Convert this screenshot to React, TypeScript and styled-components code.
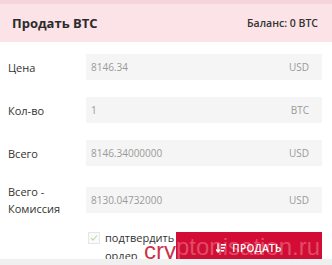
import React from "react";
import styled, { createGlobalStyle } from "styled-components";

const GlobalStyle = createGlobalStyle`
  html, body {
    margin: 0;
    padding: 0;
    background: #f0f0f0;
    font-family: "Open Sans", "Liberation Sans", sans-serif;
    color: #333;
  }
`;

const Panel = styled.div`
  position: relative;
  width: 332px;
  height: 259px;
  background: #fff;
  border-top: 4px solid #f5d4da;
  box-sizing: border-box;
`;

const Header = styled.div`
  height: 38px;
  background: #fbe3e7;
  display: flex;
  align-items: center;
  justify-content: space-between;
  padding: 0 14px 0 12px;
`;

const Title = styled.h2`
  margin: 0;
  font-size: 13px;
  font-weight: 700;
  color: #2b2b2b;
`;

const Balance = styled.span`
  font-size: 10.5px;
  font-weight: 600;
  color: #333;
`;

const Form = styled.div`
  display: flex;
  flex-direction: column;
  gap: 17px;
  padding: 12px 10px 0 8px;
`;

const Row = styled.div`
  display: grid;
  grid-template-columns: 78px 1fr;
  align-items: center;
`;

const Label = styled.label`
  font-size: 11px;
  line-height: 17px;
  color: #333;
  white-space: pre-line;
`;

const Field = styled.div`
  height: 26px;
  background: #f5f5f5;
  display: flex;
  align-items: center;
  justify-content: space-between;
  padding: 0 13px 0 5px;
  font-size: 10px;
  color: #9a9a9a;
`;

const Submit = styled.div`
  display: flex;
  align-items: flex-start;
  margin-left: 80px;
`;

const Confirm = styled.div`
  display: flex;
  gap: 5px;
  width: 88px;
  margin-top: -3px;
`;

const Box = styled.span`
  flex: none;
  width: 10px;
  height: 10px;
  margin-top: 1px;
  border: 1px solid #e6e6e6;
  background: #fafafa;
  display: flex;
  align-items: center;
  justify-content: center;
`;

const ConfirmText = styled.span`
  font-size: 11px;
  line-height: 18px;
  margin-top: -2px;
  color: #333;
`;

const SellButton = styled.button`
  position: relative;
  overflow: hidden;
  width: 146px;
  height: 31px;
  padding: 0;
  border: none;
  background: #d30c36;
  color: #fff;
  font-family: inherit;
  font-size: 10px;
  font-weight: 600;
  letter-spacing: 0.3px;
  margin-top: -2px;
`;

const ButtonFace = styled.span`
  position: relative;
  z-index: 3;
  height: 100%;
  display: flex;
  align-items: center;
  justify-content: center;
  gap: 6px;
`;

const Watermark = styled.div<{ $light?: boolean }>`
  position: absolute;
  left: ${(p) => (p.$light ? "-32px" : "144px")};
  top: ${(p) => (p.$light ? "1px" : "233px")};
  font-family: "Liberation Sans", sans-serif;
  font-size: 24px;
  font-weight: 400;
  letter-spacing: 0;
  line-height: 28px;
  color: ${(p) => (p.$light ? "rgba(255, 150, 170, 0.45)" : "rgba(196, 22, 52, 0.9)")};
  pointer-events: none;
  white-space: nowrap;
  z-index: ${(p) => (p.$light ? 2 : 0)};
`;

const rows = [
  { label: "Цена", value: "8146.34", unit: "USD" },
  { label: "Кол-во", value: "1", unit: "BTC" },
  { label: "Всего", value: "8146.34000000", unit: "USD" },
  { label: "Всего -\nКомиссия", value: "8130.04732000", unit: "USD" },
];

export default function App() {
  return (
    <>
      <GlobalStyle />
      <Panel>
        <Header>
          <Title>Продать BTC</Title>
          <Balance>Баланс: 0 BTC</Balance>
        </Header>
        <Form>
          {rows.map((r) => (
            <Row key={r.label}>
              <Label>{r.label}</Label>
              <Field>
                <span>{r.value}</span>
                <span>{r.unit}</span>
              </Field>
            </Row>
          ))}
          <Submit>
            <Confirm>
              <Box>
                <svg width="8" height="8" viewBox="0 0 8 8">
                  <path d="M1 4.2 L3 6 L7 1.5" fill="none" stroke="#b8d89a" strokeWidth="1.1" />
                </svg>
              </Box>
              <ConfirmText>
                подтвердить
                <br />
                ордер
              </ConfirmText>
            </Confirm>
            <SellButton>
              <Watermark $light>cryptonisation.ru</Watermark>
              <ButtonFace>
                <svg width="10" height="10" viewBox="0 0 10 10">
                  <path d="M2 0.5 V8.5 M0 6.5 L2 9 L4 6.5" fill="none" stroke="#fff" strokeWidth="1.4" />
                  <rect x="5" y="1" width="5" height="1.6" fill="#fff" />
                  <rect x="5" y="4" width="4" height="1.6" fill="#fff" />
                  <rect x="5" y="7" width="3" height="1.6" fill="#fff" />
                </svg>
                ПРОДАТЬ
              </ButtonFace>
            </SellButton>
          </Submit>
        </Form>
        <Watermark>cryptonisation.ru</Watermark>
      </Panel>
    </>
  );
}
